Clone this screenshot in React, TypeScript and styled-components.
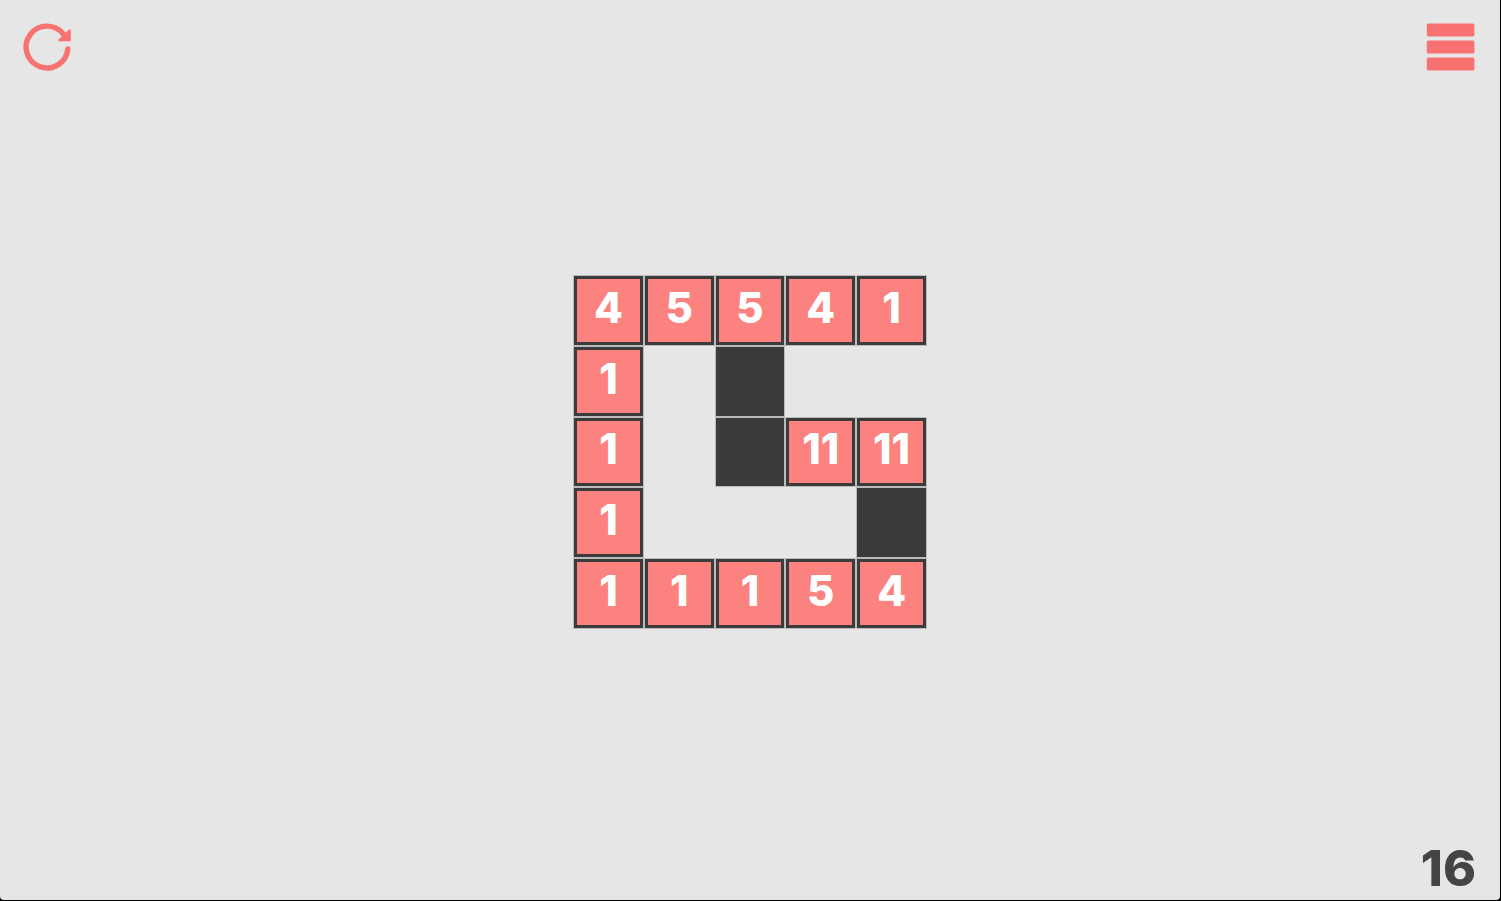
import React from "react";
import styled, { createGlobalStyle, css } from "styled-components";

const GlobalStyle = createGlobalStyle`
  *, *::before, *::after { box-sizing: border-box; }
  body { margin: 0; background: #000; }
`;

const Frame = styled.div`
  min-height: 100vh;
  padding: 0 1px 1px 0;
  display: grid;
`;

const Screen = styled.main`
  display: grid;
  grid-template-rows: 1fr auto 1fr;
  padding: 23px 24px 19px;
  background: #e6e6e6;
  border-radius: 0 0 4px 4px;
  font-family: Inter, "Liberation Sans", sans-serif;
  font-weight: 800;
`;

const Toolbar = styled.header`
  display: flex;
  justify-content: space-between;
  align-items: flex-start;
`;

const IconButton = styled.button`
  display: block;
  padding: 0;
  border: 0;
  background: none;
  color: #f87272;
  cursor: pointer;

  svg {
    display: block;
    width: 50px;
    height: 50px;
    overflow: visible;
  }
`;

const Board = styled.section`
  display: grid;
  grid-template-columns: repeat(5, 1fr);
  grid-auto-rows: 1fr;
  gap: 2px;
  width: 352px;
  height: 352px;
  justify-self: center;
`;

type Kind = "number" | "wall" | "empty";

const Tile = styled.div<{ $kind: Kind }>`
  display: flex;
  align-items: center;
  justify-content: center;
  padding-bottom: 5px;
  color: #fff;
  font-size: 42px;
  line-height: 42px;

  ${({ $kind }) =>
    $kind !== "empty" &&
    css`
      border: 3px solid #3b3b3b;
      background: ${$kind === "wall" ? "#3b3b3b" : "#fb827e"};
      box-shadow: 0 0 0 1px rgba(59, 59, 59, 0.25);
    `}
`;

const Footer = styled.footer`
  display: flex;
  justify-content: flex-end;
  align-items: flex-end;
`;

const Moves = styled.output`
  color: #444;
  font-size: 50px;
  font-weight: 800;
  line-height: 26px;
`;

type Cell = number | "wall" | null;

const cells: Cell[] = [
  4, 5, 5, 4, 1,
  1, null, "wall", null, null,
  1, null, "wall", 11, 11,
  1, null, null, null, "wall",
  1, 1, 1, 5, 4,
];

const kindOf = (cell: Cell): Kind =>
  cell === null ? "empty" : cell === "wall" ? "wall" : "number";

const RestartIcon = () => (
  <svg viewBox="0 0 50 50" fill="none" aria-hidden="true">
    <path
      d="M43.8 26A20.9 20.9 0 1 1 39.8 11.6"
      stroke="currentColor"
      strokeWidth="5.4"
      strokeLinecap="round"
    />
    <path
      d="M45.8 7.2V17.2H35.2Z"
      fill="currentColor"
      stroke="currentColor"
      strokeWidth="2"
      strokeLinejoin="round"
    />
  </svg>
);

const MenuIcon = () => (
  <svg viewBox="0 0 50 50" fill="currentColor" aria-hidden="true">
    <rect x="0.8" y="0.4" width="47.6" height="13" rx="1.6" />
    <rect x="0.8" y="17.5" width="47.6" height="13" rx="1.6" />
    <rect x="0.8" y="34.6" width="47.6" height="13" rx="1.6" />
  </svg>
);

export default function App() {
  return (
    <Frame>
      <GlobalStyle />
      <Screen>
        <Toolbar>
          <IconButton type="button" aria-label="Restart">
            <RestartIcon />
          </IconButton>
          <IconButton type="button" aria-label="Menu">
            <MenuIcon />
          </IconButton>
        </Toolbar>
        <Board aria-label="Board">
          {cells.map((cell, index) => (
            <Tile key={index} $kind={kindOf(cell)}>
              {typeof cell === "number" ? cell : null}
            </Tile>
          ))}
        </Board>
        <Footer>
          <Moves aria-label="Moves">16</Moves>
        </Footer>
      </Screen>
    </Frame>
  );
}
